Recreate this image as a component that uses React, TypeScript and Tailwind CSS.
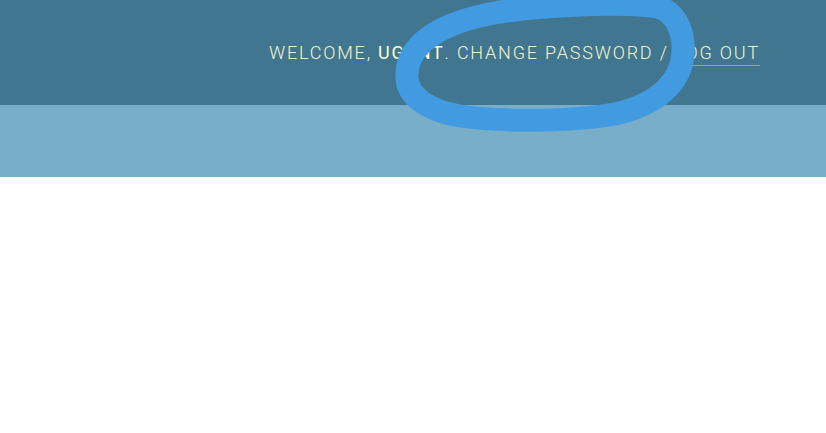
export default function App() {
  return (
    <div className="relative w-[826px] h-[433px] bg-white overflow-hidden" style={{ fontFamily: "Roboto, 'Liberation Sans', sans-serif" }}>
      <header className="h-[105px] bg-[#417690] flex items-center justify-end pr-[66px]">
        <div className="text-[18px] font-light tracking-[1.8px] uppercase text-[#f2f5cf] whitespace-nowrap">
          Welcome, <strong className="font-normal text-[#ffffcc]">ugent</strong>.{" "}
          <a>Change password</a> /{" "}
          <a className="border-b border-[#ffffcc]/40 pb-[2px]">Log out</a>
        </div>
      </header>
      <div className="h-[72px] bg-[#79aec8]" />
      <svg className="absolute left-0 top-0 pointer-events-none" width="826" height="433" viewBox="0 0 826 433">
        <path
          d="M 407 78 C 405 45, 440 22, 500 12 C 560 4, 630 2, 658 7 C 678 13, 684 35, 683 52 C 682 80, 660 104, 615 114 C 570 122, 500 122, 460 116 C 425 110, 408 95, 407 78 Z"
          fill="none"
          stroke="#429be0"
          strokeWidth="23"
        />
      </svg>
    </div>
  );
}
